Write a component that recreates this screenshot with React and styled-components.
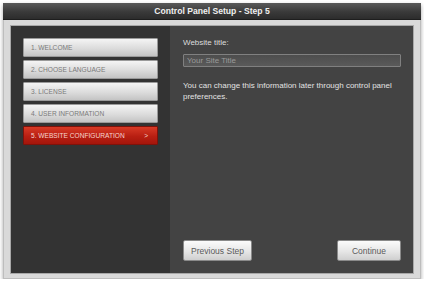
import React from "react";
import styled, { createGlobalStyle } from "styled-components";

const Global = createGlobalStyle`
  html, body { margin: 0; padding: 0; background: #fff; }
  body { font-family: "Liberation Sans", "DejaVu Sans", sans-serif; }
`;

const Window = styled.div`
  width: 418px;
  margin: 3px 0 0 3px;
  box-shadow: 0 2px 4px rgba(0, 0, 0, 0.35);
`;

const TitleBar = styled.div`
  height: 16px;
  background: linear-gradient(#5a5a5a, #3a3a3a 55%, #2c2c2c);
  color: #f0f0f0;
  font-weight: bold;
  font-size: 8.6px;
  line-height: 16px;
  text-align: center;
  border-bottom: 1px solid #1e1e1e;
`;

const Frame = styled.div`
  background: #d9d9d9;
  padding: 5px 6px 4px 6px;
  border: 1px solid #bdbdbd;
  border-top: none;
`;

const Panel = styled.div`
  display: grid;
  grid-template-columns: 159px 1fr;
  height: 249px;
  border: 1px solid #a8a8a8;
  box-sizing: border-box;
`;

const Sidebar = styled.nav`
  background: #333;
  padding: 12px 12px 0 12px;
  display: flex;
  flex-direction: column;
  gap: 3px;
`;

const Step = styled.div`
  height: 19px;
  box-sizing: border-box;
  display: flex;
  align-items: center;
  justify-content: space-between;
  padding: 0 9px 0 7px;
  font-size: 6.6px;
  text-transform: uppercase;
  border-radius: 1px;
  color: ${(p) => (p.$active ? "#f6d6cf" : "#7a7a7a")};
  background: ${(p) =>
    p.$active
      ? "linear-gradient(#d83a26, #b81f12 55%, #a3150b)"
      : "linear-gradient(#f4f4f4, #dcdcdc 55%, #c4c4c4)"};
  border: 1px solid ${(p) => (p.$active ? "#7e120a" : "#9a9a9a")};
`;

const Content = styled.section`
  background: #434343;
  padding: 11px 12px 12px 13px;
  display: flex;
  flex-direction: column;
  color: #e6e6e6;
  font-size: 8px;
`;

const Label = styled.div`
  line-height: 12px;
  color: #dcdcdc;
`;

const Input = styled.input`
  margin-top: 5px;
  height: 13px;
  box-sizing: border-box;
  width: 100%;
  background: linear-gradient(#4d4d4d, #5a5a5a);
  border: 1px solid #808080;
  border-radius: 1px;
  color: #ddd;
  font-family: inherit;
  font-size: 8px;
  padding: 0 3px;
  &::placeholder { color: #9a9a9a; }
`;

const Note = styled.p`
  margin: 13px 0 0;
  line-height: 11px;
  color: #e2e2e2;
`;

const Actions = styled.div`
  margin-top: auto;
  display: flex;
  justify-content: space-between;
`;

const Button = styled.button`
  height: 21px;
  width: ${(p) => p.$w}px;
  box-sizing: border-box;
  border: 1px solid #8a8a8a;
  border-radius: 2px;
  background: linear-gradient(#fbfbfb, #e6e6e6 55%, #cfcfcf);
  color: #5a5a5a;
  font-family: inherit;
  font-size: 8.5px;
  padding: 0;
`;

const steps = [
  "1. Welcome",
  "2. Choose Language",
  "3. License",
  "4. User Information",
  "5. Website Configuration",
];

export default function App() {
  return (
    <>
      <Global />
      <Window>
        <TitleBar>Control Panel Setup - Step 5</TitleBar>
        <Frame>
          <Panel>
            <Sidebar>
              {steps.map((s, i) => (
                <Step key={s} $active={i === 4}>
                  <span>{s}</span>
                  {i === 4 && <span>&gt;</span>}
                </Step>
              ))}
            </Sidebar>
            <Content>
              <Label>Website title:</Label>
              <Input placeholder="Your Site Title" />
              <Note>
                You can change this information later through control panel
                preferences.
              </Note>
              <Actions>
                <Button $w={69}>Previous Step</Button>
                <Button $w={64}>Continue</Button>
              </Actions>
            </Content>
          </Panel>
        </Frame>
      </Window>
    </>
  );
}
